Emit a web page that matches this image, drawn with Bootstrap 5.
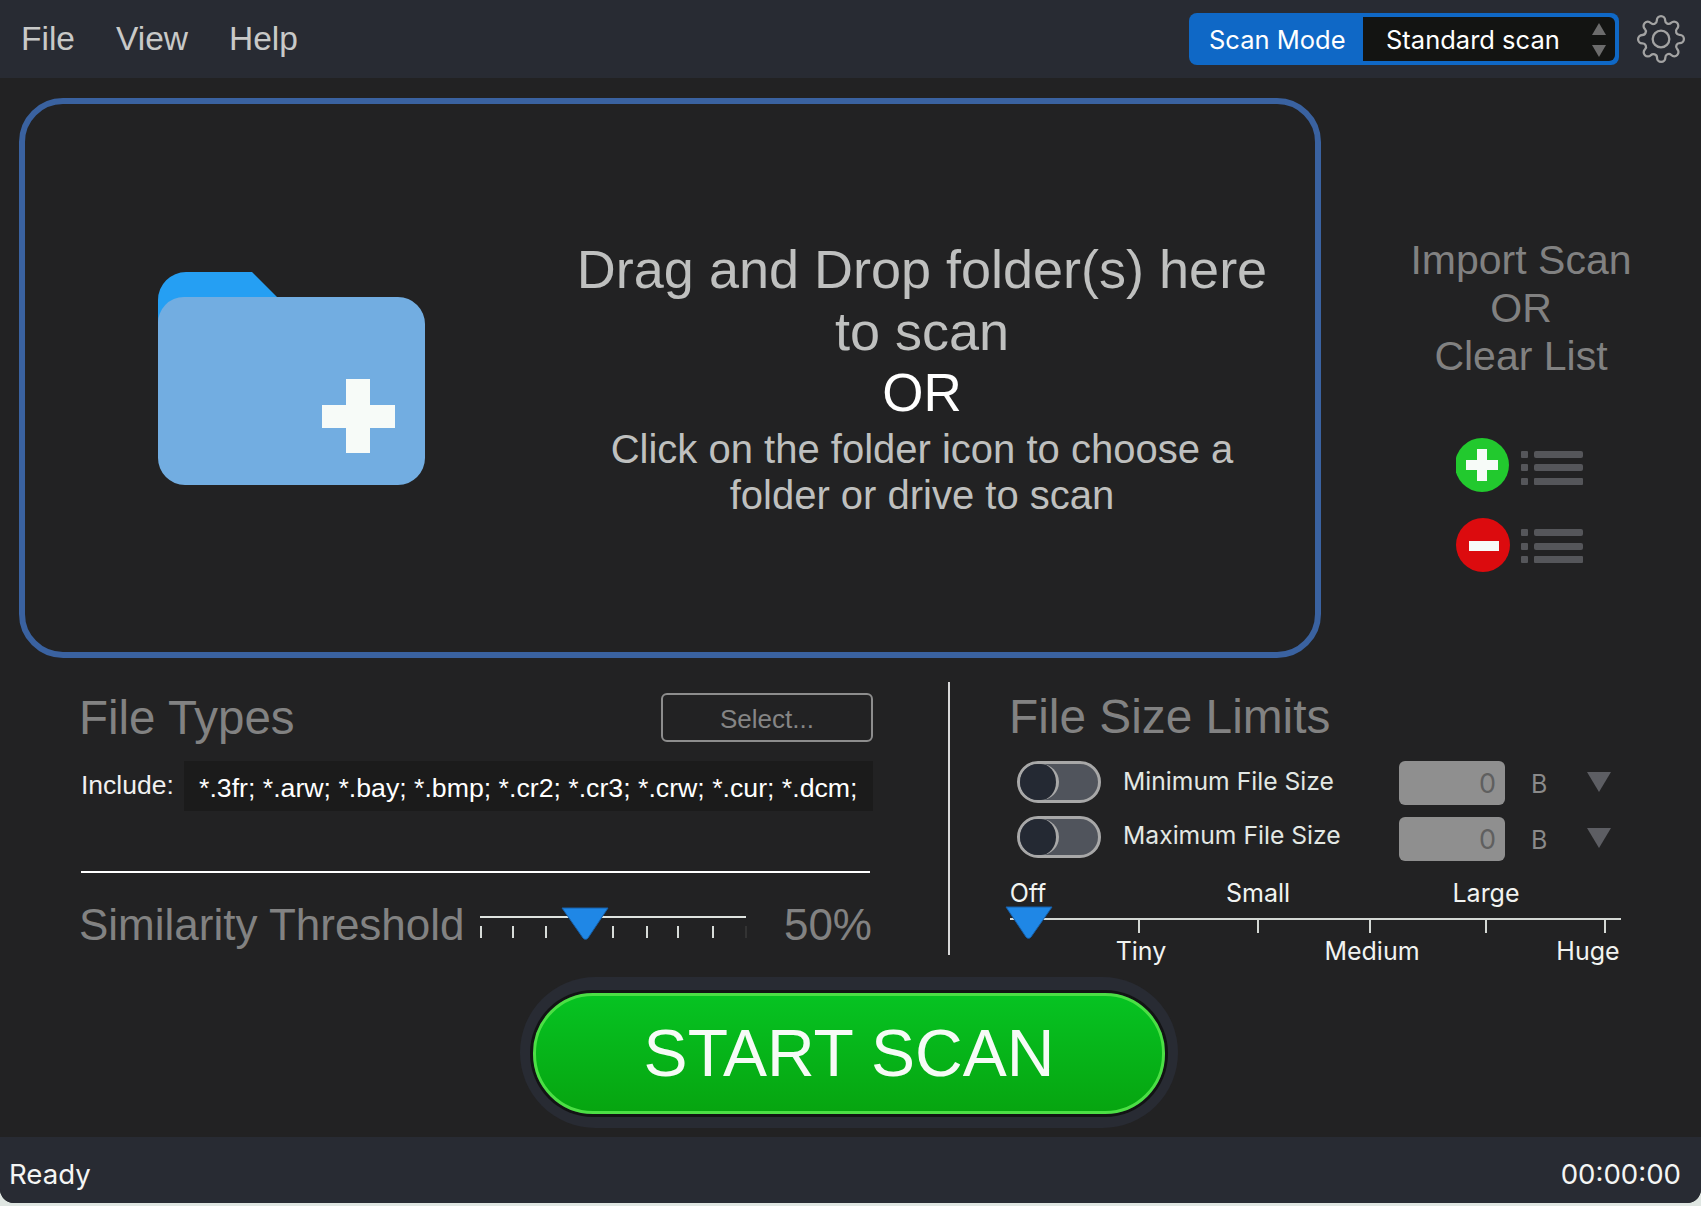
<!doctype html>
<html lang="en"><head><meta charset="utf-8"><title>Scan</title>
<link href="https://cdn.jsdelivr.net/npm/bootstrap@5.3.0/dist/css/bootstrap.min.css" rel="stylesheet">
<style>
html,body{height:1206px;overflow:hidden}
body{background:#dfe6e2;font-family:"Liberation Sans",Arial,sans-serif}
.app-shell{width:1701px;height:1203px;background:#222223;border-radius:0 0 14px 14px;overflow:hidden}
.menu-strip{height:78px;background:#282b33;padding:0 15px 0 21px}
.menu-strip .nav-link{color:#c8c9c8;font-size:33.5px;line-height:40px;padding:0;margin-right:41px}
.mode-group{width:430px;height:52px;margin-right:17px;background:#0f68c6;border-radius:8px;padding:4px;flex-wrap:nowrap}
.mode-group .input-group-text{background:transparent;border:0;color:#fff;font-family:Inter,sans-serif;font-size:25.5px;padding:3px 0 0 16px;width:171px;border-radius:0}
.mode-select{flex:1;background:#131412;color:#fff;font-family:Inter,sans-serif;font-size:25.5px;padding:3px 0 0 23px;border-radius:0 6px 6px 0}
.mode-arrows{margin-top:-3px}
.drop-frame{width:1302px;height:560px;margin:20px 0 0 19px;border:6px solid #3a62a0;border-radius:44px;padding-left:133px}
.drop-copy{width:748px;margin-left:123px;text-align:center;color:#bfc0bf}
.copy-big{font-size:54px;line-height:62px;margin-top:-1px}
.copy-or{color:#fff;font-size:53px;line-height:62px}
.copy-mid{font-size:40px;line-height:46px;margin-top:2px}
.side-col{width:360px;margin:158px 0 0 20px;color:#818181;font-size:41px;line-height:48px;text-align:center}
.list-tools{margin-top:58px;gap:26px}
.lower-row{height:273px;margin-top:24px}
.types-panel{width:950px;padding:11px 75px 0 79px;border-right:2px solid #d8d8d8}
.panel-title{font-size:47.5px;line-height:49px;color:#828282;margin:0;font-weight:400}
.select-btn{width:212px;height:49px;border:2px solid #8d8d8d;border-radius:6px;color:#858585;font-size:26px;line-height:48px;padding:0;background:transparent}
.include-row{margin-top:19px;height:50px;padding-left:2px}
.include-label{width:103px;font-size:26.5px;color:#f0f0f0;padding-top:5px}
.include-box{flex:1;background:#1b1b1b;color:#fff;font-size:26.7px;line-height:54px;padding-left:15px;white-space:nowrap;overflow:hidden}
.types-rule{margin:60px 3px 0 2px;border:0;border-top:2px solid #fff;opacity:1}
.thresh-row{margin-top:24px;height:56px;color:#828282;font-size:44px;line-height:56px;padding-right:1px}
.thresh-scale{width:270px;height:40px;margin:-1px 0 0 15px;overflow:visible}
.size-panel{padding:7px 0 0 59px;flex:1}
.size-title{font-size:47.8px;line-height:56px;color:#828282;margin:0 0 15px;font-weight:400}
.limit-row{height:44px;margin:0 0 12px 8px}
.limit-toggle{width:84px;height:42px;border:3px solid #a8a8a8;border-radius:21px;background:#50545c;flex:none}
.limit-knob{display:block;width:39px;height:36px;background:#242933;border-right:3px solid #a8a8a8;border-radius:18px}
.limit-name{width:298px;padding-left:22px;color:#e3e8e4;font-family:Inter,sans-serif;font-size:24.7px}
.limit-value{width:106px;height:44px;margin-top:2px;background:#8f8f8f;border-radius:6px;text-align:right;padding:0 9px 0 0;color:#5f5f5f;font-size:27px;line-height:46px;font-family:Inter,sans-serif}
.limit-unit{width:54px;padding-left:26px;color:#8a8a8a;font-family:Inter,sans-serif;font-size:25px;padding-top:5px}
.limit-arrow{width:24px;height:20px;margin:0 0 0 28px}
.limit-row-alt .limit-name{margin-top:-4px}
.limit-row-alt .limit-toggle{margin-top:-2px}
.scale-grid{display:grid;grid-template-columns:44px 34px 114px 120px 108px 120px 84px;grid-template-rows:30px 28px 30px;margin:18px 0 0 -3px;color:#f1f3f1;font-family:Inter,sans-serif;font-size:25px;line-height:30px;text-align:center;white-space:nowrap;width:624px}
.scale-line{grid-column:1/-1;overflow:visible;display:block}
.cell-off{grid-column:1;justify-self:center}
.cell-small{grid-column:4}.cell-large{grid-column:6}
.cell-tiny{grid-column:3;grid-row:3}.cell-medium{grid-column:5;grid-row:3}.cell-huge{grid-column:7;grid-row:3}
.start-ring{width:658px;height:151px;margin:22px 0 0 520px;background:#282b33;border-radius:76px;padding:16px 13px 14px}
.start-btn{display:block;width:100%;height:121px;border:3px solid #4cdf45;border-radius:60px;background:linear-gradient(#06c322,#06a510);box-shadow:0 0 0 3px #121314;color:#f6fbf6;font-size:66px;line-height:113px;padding:0}
.status-strip{height:66px;margin-top:9px;background:#282b33;color:#f4f5f4;font-family:Inter,sans-serif;font-size:27.6px;padding:9px 20px 0 9px}
</style></head>
<body>
<div class="app-shell d-flex flex-column">
  <nav class="menu-strip d-flex align-items-center">
    <ul class="nav">
      <li class="nav-item"><a class="nav-link" href="#">File</a></li>
      <li class="nav-item"><a class="nav-link" href="#">View</a></li>
      <li class="nav-item"><a class="nav-link" href="#">Help</a></li>
    </ul>
    <div class="input-group mode-group ms-auto">
      <span class="input-group-text">Scan Mode</span>
      <div class="mode-select d-flex align-items-center justify-content-between">Standard scan
        <svg width="24" height="40" viewBox="0 0 24 40" class="me-1 mode-arrows"><path d="M12 4l7 12H5z" fill="#6c6c6c"/><path d="M12 38l-7-12h14z" fill="#6c6c6c"/></svg>
      </div>
    </div>
    <svg width="50" height="50" viewBox="0 0 24 24" fill="none" stroke="#a3a3a3" stroke-width="1.1"><circle cx="12" cy="12" r="4"/><path d="M19.4 15a1.65 1.65 0 0 0 .33 1.82l.06.06a2 2 0 0 1 0 2.83 2 2 0 0 1-2.83 0l-.06-.06a1.65 1.65 0 0 0-1.82-.33 1.65 1.65 0 0 0-1 1.51V21a2 2 0 0 1-2 2 2 2 0 0 1-2-2v-.09A1.65 1.65 0 0 0 9 19.4a1.65 1.65 0 0 0-1.82.33l-.06.06a2 2 0 0 1-2.83 0 2 2 0 0 1 0-2.83l.06-.06a1.65 1.65 0 0 0 .33-1.82 1.65 1.65 0 0 0-1.51-1H3a2 2 0 0 1-2-2 2 2 0 0 1 2-2h.09A1.65 1.65 0 0 0 4.6 9a1.65 1.65 0 0 0-.33-1.82l-.06-.06a2 2 0 0 1 0-2.83 2 2 0 0 1 2.83 0l.06.06a1.65 1.65 0 0 0 1.82.33H9a1.65 1.65 0 0 0 1-1.51V3a2 2 0 0 1 2-2 2 2 0 0 1 2 2v.09a1.65 1.65 0 0 0 1 1.51 1.65 1.65 0 0 0 1.82-.33l.06-.06a2 2 0 0 1 2.83 0 2 2 0 0 1 0 2.83l-.06.06a1.65 1.65 0 0 0-.33 1.82V9a1.65 1.65 0 0 0 1.51 1H21a2 2 0 0 1 2 2 2 2 0 0 1-2 2h-.09a1.65 1.65 0 0 0-1.51 1z"/></svg>
  </nav>
  <main class="flex-grow-1 d-flex flex-column">
    <div class="d-flex">
      <section class="drop-frame d-flex align-items-center">
        <svg width="267" height="213" viewBox="0 0 267 213"><path d="M0 40V28A28 28 0 0 1 28 0h66l26 26H80V80H0z" fill="#259ff3"/><path d="M0 52A26 26 0 0 1 26 25H240A27 27 0 0 1 267 52V186A27 27 0 0 1 240 213H27A27 27 0 0 1 0 186z" fill="#72ade1"/><path d="M188 107h24v26h25v23h-25v25h-24v-25h-24v-23h24z" fill="#f7fbf8"/></svg>
        <div class="drop-copy">
          <div class="copy-big">Drag and Drop folder(s) here<br>to scan</div>
          <div class="copy-or">OR</div>
          <div class="copy-mid">Click on the folder icon to choose a<br>folder or drive to scan</div>
        </div>
      </section>
      <aside class="side-col">
        <div>Import Scan<br>OR<br>Clear List</div>
        <div class="list-tools d-flex flex-column align-items-center">
          <svg width="130" height="54" viewBox="0 0 130 54"><circle cx="26" cy="27" r="27" fill="#22c92e"/><path d="M21 11h10v11h11v10H31v11H21V32H10V22h11z" fill="#f7fbf8"/><g fill="#55565a"><rect x="65" y="13" width="7" height="7" rx="1"/><rect x="78" y="13" width="49" height="7" rx="2"/><rect x="65" y="26" width="7" height="7" rx="1"/><rect x="78" y="26" width="49" height="7" rx="2"/><rect x="65" y="40" width="7" height="7" rx="1"/><rect x="78" y="40" width="49" height="7" rx="1"/></g></svg>
          <svg width="130" height="54" viewBox="0 0 130 54"><circle cx="27" cy="27" r="27" fill="#dc0b0e"/><rect x="13" y="23" width="30" height="10" fill="#f7fbf8"/><g fill="#55565a"><rect x="65" y="11" width="7" height="7" rx="1"/><rect x="78" y="11" width="49" height="7" rx="2"/><rect x="65" y="25" width="7" height="7" rx="1"/><rect x="78" y="25" width="49" height="7" rx="2"/><rect x="65" y="38" width="7" height="7" rx="1"/><rect x="78" y="38" width="49" height="7" rx="1"/></g></svg>
        </div>
      </aside>
    </div>
    <div class="lower-row d-flex">
      <section class="types-panel">
        <div class="d-flex justify-content-between align-items-center">
          <h2 class="panel-title">File Types</h2>
          <button class="btn select-btn" type="button">Select...</button>
        </div>
        <div class="include-row d-flex">
          <div class="include-label">Include:</div>
          <div class="include-box">*.3fr; *.arw; *.bay; *.bmp; *.cr2; *.cr3; *.crw; *.cur; *.dcm;</div>
        </div>
        <hr class="types-rule">
        <div class="thresh-row d-flex align-items-center">
          <span>Similarity Threshold</span>
          <svg class="thresh-scale" viewBox="0 0 270 40"><rect x="0" y="11" width="266" height="2" fill="#dfe4e0"/><g stroke="#d8dcd8" stroke-width="2"><path d="M1 21v12M33 21v12M66 21v12M133 21v12M167 21v12M198 21v12M233 21v12"/></g><path d="M266 21v12" stroke="#444" stroke-width="1"/><path d="M82 3h46l-20 30a3 3 0 0 1-5 0z" fill="#1f87e6" stroke="#175fa8" stroke-width="1"/></svg>
          <span class="ms-auto">50%</span>
        </div>
      </section>
      <section class="size-panel">
        <h2 class="size-title">File Size Limits</h2>
        <div class="limit-row d-flex align-items-center">
          <div class="limit-toggle"><span class="limit-knob"></span></div>
          <div class="limit-name">Minimum File Size</div>
          <div class="limit-value">0</div>
          <div class="limit-unit">B</div>
          <svg class="limit-arrow" viewBox="0 0 24 20"><path d="M0 0h24L12 20z" fill="#5d5e63"/></svg>
        </div>
        <div class="limit-row limit-row-alt d-flex align-items-center">
          <div class="limit-toggle"><span class="limit-knob"></span></div>
          <div class="limit-name">Maximum File Size</div>
          <div class="limit-value">0</div>
          <div class="limit-unit">B</div>
          <svg class="limit-arrow" viewBox="0 0 24 20"><path d="M0 0h24L12 20z" fill="#5d5e63"/></svg>
        </div>
        <div class="scale-grid">
          <span class="cell-off">Off</span><span class="cell-small">Small</span><span class="cell-large">Large</span>
          <svg class="scale-line" width="624" height="28" viewBox="0 0 624 28"><rect x="4" y="10" width="611" height="2" fill="#d4d8d4"/><path d="M133 11v14M252 11v14M364 11v14M480 11v14M599 11v14" stroke="#d4d8d4" stroke-width="2"/><path d="M0-1h46L25 29a3 3 0 0 1-5 0z" fill="#1f87e6" stroke="#175fa8" stroke-width="1"/></svg>
          <span class="cell-tiny">Tiny</span><span class="cell-medium">Medium</span><span class="cell-huge">Huge</span>
        </div>
      </section>
    </div>
    <div class="start-ring"><button class="btn start-btn" type="button">START SCAN</button></div>
    <footer class="status-strip d-flex align-items-center justify-content-between"><span>Ready</span><span>00:00:00</span></footer>
  </main>
</div>
<script src="https://cdn.jsdelivr.net/npm/bootstrap@5.3.0/dist/js/bootstrap.bundle.min.js"></script>
</body></html>
